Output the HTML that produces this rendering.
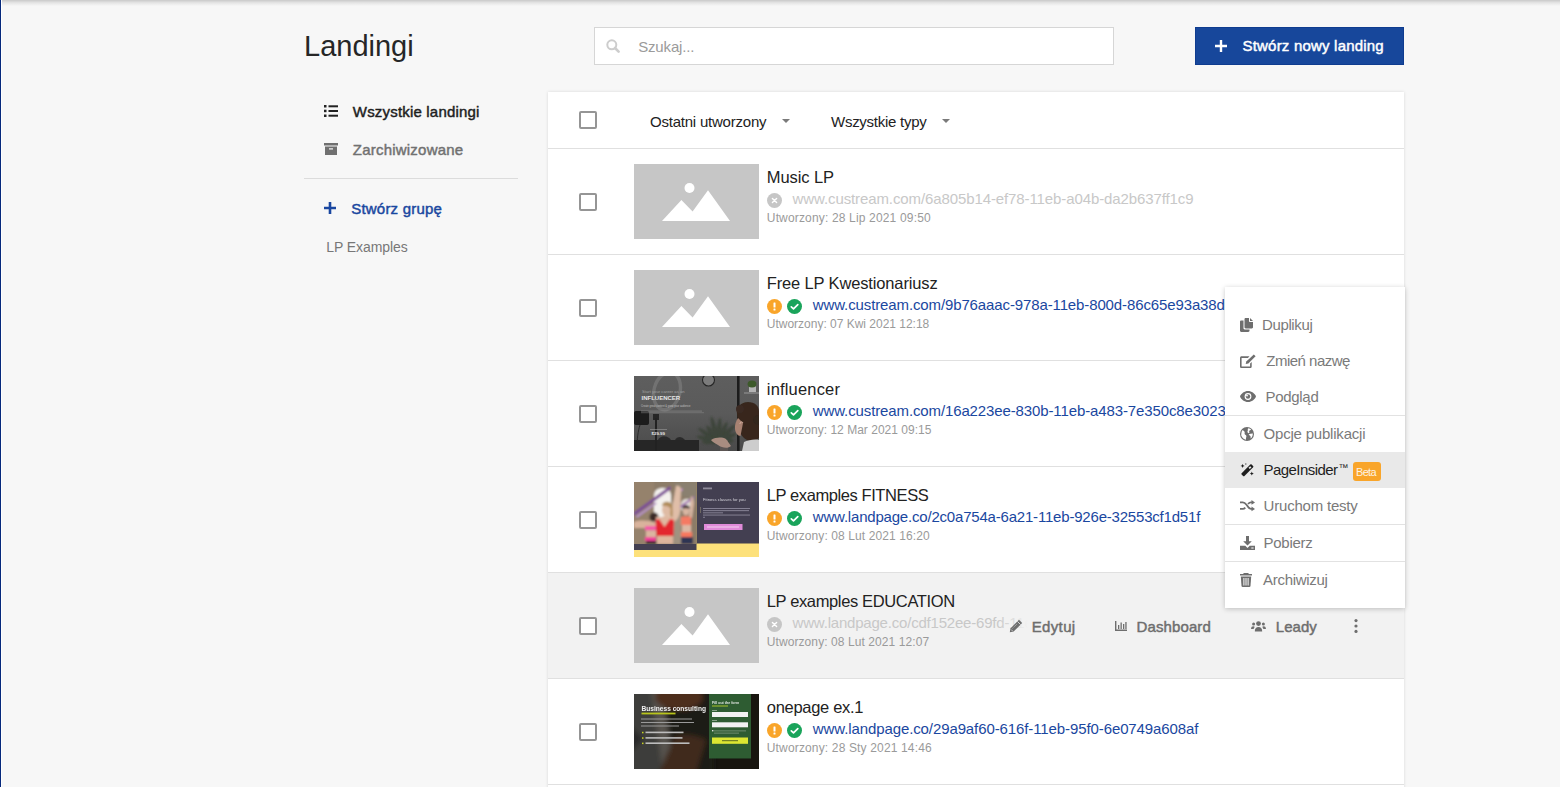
<!DOCTYPE html>
<html><head><meta charset="utf-8"><title>Landingi</title>
<style>
*{box-sizing:border-box;margin:0;padding:0}
html,body{width:1560px;height:787px;overflow:hidden;background:#f7f7f7;font-family:"Liberation Sans",sans-serif;color:#222}
.t{position:absolute;white-space:nowrap}
.r{position:absolute}
</style></head><body>
<div class="r" style="left:0px;top:0px;width:1560px;height:6px;background:linear-gradient(#c9c9c9,#e4e4e4 45%,#f7f7f7)"></div>
<div class="r" style="left:0px;top:0px;width:1px;height:787px;background:#06297c"></div>
<div class="r" style="left:1px;top:0px;width:1px;height:787px;background:#fff"></div>
<div class="t" style="left:304px;top:32px;font-size:29px;line-height:29px;color:#262626">Landingi</div>
<div class="r" style="left:594px;top:27px;width:520px;height:38px;background:#fff;border:1px solid #d6d6d6"></div>
<div class="r" style="left:606px;top:39px;line-height:0"><svg width="14" height="14" viewBox="0 0 14 14"><circle cx="5.8" cy="5.8" r="4.5" fill="none" stroke="#cdcdcd" stroke-width="2"/><path d="M9 9 L12.6 12.6" stroke="#cdcdcd" stroke-width="2.6" stroke-linecap="round"/></svg></div>
<div class="t" style="left:638.2px;top:39px;font-size:15px;line-height:15px;color:#9b9b9b;letter-spacing:-0.162px">Szukaj...</div>
<div class="r" style="left:1195px;top:27px;width:209px;height:38px;background:#17479b;border:1px solid #0f3c8f"></div>
<div class="r" style="left:1215px;top:40px;line-height:0"><svg width="12" height="12" viewBox="0 0 12 12"><path d="M6 0V12M0 6H12" stroke="#fff" stroke-width="2.4"/></svg></div>
<div class="t" style="left:1242.5px;top:38px;font-size:15px;line-height:15px;color:#fff;-webkit-text-stroke:0.45px #fff;letter-spacing:0.2px">Stwórz nowy landing</div>
<div class="r" style="left:324px;top:105px;line-height:0"><svg width="14" height="12" viewBox="0 0 14 12"><rect x="0" y="0" width="2.5" height="2.5" fill="#222"/><rect x="0" y="4.7" width="2.5" height="2.5" fill="#222"/><rect x="0" y="9.5" width="2.5" height="2.5" fill="#222"/><rect x="4.5" y="0.3" width="9.5" height="2" fill="#222"/><rect x="4.5" y="5" width="9.5" height="2" fill="#222"/><rect x="4.5" y="9.7" width="9.5" height="2" fill="#222"/></svg></div>
<div class="t" style="left:352.8px;top:104px;font-size:15px;line-height:15px;color:#1e1e1e;-webkit-text-stroke:0.45px #1e1e1e;letter-spacing:0.188px">Wszystkie landingi</div>
<div class="r" style="left:324px;top:143px;line-height:0"><svg width="14" height="12" viewBox="0 0 14 12"><rect x="0" y="0" width="14" height="2.5" fill="#707070"/><rect x="1" y="3.5" width="12" height="8.5" fill="#707070"/><rect x="5" y="5.3" width="4" height="1.2" fill="#f7f7f7"/></svg></div>
<div class="t" style="left:352.8px;top:142px;font-size:15px;line-height:15px;color:#717171;-webkit-text-stroke:0.45px #717171;letter-spacing:0.215px">Zarchiwizowane</div>
<div class="r" style="left:304px;top:178px;width:214px;height:1px;background:#dcdcdc"></div>
<div class="r" style="left:324px;top:202px;line-height:0"><svg width="12" height="12" viewBox="0 0 12 12"><path d="M6 0V12M0 6H12" stroke="#1a47a0" stroke-width="2.6"/></svg></div>
<div class="t" style="left:351.2px;top:201px;font-size:15px;line-height:15px;color:#1a47a0;-webkit-text-stroke:0.45px #1a47a0;letter-spacing:0.218px">Stwórz grupę</div>
<div class="t" style="left:326.3px;top:240px;font-size:14px;line-height:14px;color:#777;letter-spacing:-0.09px">LP Examples</div>
<div class="r" style="left:548px;top:92px;width:856px;height:700px;background:#fff;box-shadow:0 0 3px rgba(0,0,0,.13)"></div>
<div class="r" style="left:579px;top:111px;width:18px;height:18px;background:#fff;border:2px solid #959595;border-radius:2px"></div>
<div class="t" style="left:650px;top:114px;font-size:15px;line-height:15px;color:#222;letter-spacing:-0.219px">Ostatni utworzony</div>
<div class="r" style="left:782px;top:118px;line-height:0"><svg width="8" height="4" viewBox="0 0 8 4"><path d="M0 0H8L4 4Z" fill="#7a7a7a"/></svg></div>
<div class="t" style="left:831px;top:114px;font-size:15px;line-height:15px;color:#222;letter-spacing:-0.262px">Wszystkie typy</div>
<div class="r" style="left:942px;top:118px;line-height:0"><svg width="8" height="4" viewBox="0 0 8 4"><path d="M0 0H8L4 4Z" fill="#7a7a7a"/></svg></div>
<div class="r" style="left:548px;top:148px;width:856px;height:1px;background:#e0e0e0"></div>
<div class="r" style="left:579px;top:193px;width:18px;height:18px;background:#fff;border:2px solid #959595;border-radius:2px"></div>
<div class="r" style="left:634px;top:164px;line-height:0"><svg width="125" height="75" viewBox="0 0 125 75"><rect width="125" height="75" fill="#c6c6c6"/><circle cx="55.5" cy="24" r="5" fill="#fff"/><path d="M28 57L47.4 36L58.6 47.4L74 26.3L96 57Z" fill="#fff"/></svg></div>
<div class="t" style="left:766.8px;top:169px;font-size:16.5px;line-height:16.5px;color:#222;letter-spacing:-0.086px">Music LP</div>
<div class="r" style="left:767px;top:193px;line-height:0"><svg width="15" height="15" viewBox="0 0 15 15"><circle cx="7.5" cy="7.5" r="7.5" fill="#c6c6c6"/><path d="M5.4 5.4L9.6 9.6M9.6 5.4L5.4 9.6" stroke="#fff" stroke-width="1.4" stroke-linecap="round"/></svg></div>
<div class="t" style="left:792.6px;top:191px;font-size:15px;line-height:15px;color:#c8c8c8;letter-spacing:-0.104px">www.custream.com/6a805b14-ef78-11eb-a04b-da2b637ff1c9</div>
<div class="t" style="left:766.8px;top:212px;font-size:12px;line-height:12px;color:#9a9a9a;letter-spacing:0.163px">Utworzony: 28 Lip 2021 09:50</div>
<div class="r" style="left:548px;top:254px;width:856px;height:1px;background:#e0e0e0"></div>
<div class="r" style="left:579px;top:299px;width:18px;height:18px;background:#fff;border:2px solid #959595;border-radius:2px"></div>
<div class="r" style="left:634px;top:270px;line-height:0"><svg width="125" height="75" viewBox="0 0 125 75"><rect width="125" height="75" fill="#c6c6c6"/><circle cx="55.5" cy="24" r="5" fill="#fff"/><path d="M28 57L47.4 36L58.6 47.4L74 26.3L96 57Z" fill="#fff"/></svg></div>
<div class="t" style="left:766.8px;top:275px;font-size:16.5px;line-height:16.5px;color:#222;letter-spacing:-0.148px">Free LP Kwestionariusz</div>
<div class="r" style="left:767px;top:299px;line-height:0"><svg width="15" height="15" viewBox="0 0 15 15"><circle cx="7.5" cy="7.5" r="7.5" fill="#f9a52a"/><rect x="6.5" y="3.5" width="2" height="5" rx=".5" fill="#fff"/><rect x="6.5" y="9.6" width="2" height="2" rx=".5" fill="#fff"/></svg></div>
<div class="r" style="left:787px;top:299px;line-height:0"><svg width="15" height="15" viewBox="0 0 15 15"><circle cx="7.5" cy="7.5" r="7.5" fill="#1aa45b"/><path d="M4.3 7.8L6.5 9.8L10.8 5.6" fill="none" stroke="#fff" stroke-width="1.7" stroke-linecap="round" stroke-linejoin="round"/></svg></div>
<div class="t" style="left:812.8px;top:297px;font-size:15px;line-height:15px;color:#1a47a0;letter-spacing:-0.12px">www.custream.com/9b76aaac-978a-11eb-800d-86c65e93a38d</div>
<div class="t" style="left:766.8px;top:318px;font-size:12px;line-height:12px;color:#9a9a9a;letter-spacing:-0.011px">Utworzony: 07 Kwi 2021 12:18</div>
<div class="r" style="left:548px;top:360px;width:856px;height:1px;background:#e0e0e0"></div>
<div class="r" style="left:579px;top:405px;width:18px;height:18px;background:#fff;border:2px solid #959595;border-radius:2px"></div>
<div class="r" style="left:634px;top:376px;line-height:0"><svg width="125" height="75" viewBox="0 0 125 75">
<defs>
<linearGradient id="ig" x1="0" y1="0" x2="0" y2="1"><stop offset="0" stop-color="#5e5e5e"/><stop offset=".5" stop-color="#5a5a5a"/><stop offset="1" stop-color="#4a4a4a"/></linearGradient>
<filter id="bl" x="-10%" y="-10%" width="120%" height="120%"><feGaussianBlur stdDeviation="0.55"/></filter>
<filter id="bl2" x="-20%" y="-20%" width="140%" height="140%"><feGaussianBlur stdDeviation="0.9"/></filter>
</defs>
<rect width="125" height="75" fill="url(#ig)"/>
<g filter="url(#bl)">
<ellipse cx="33" cy="15" rx="13" ry="19" fill="none" stroke="#727272" stroke-width="3.4" transform="rotate(15 33 15)"/>

<circle cx="74.5" cy="4" r="6" fill="#7c7c7c" stroke="#262626" stroke-width="1.1"/>
<rect x="110" y="16" width="15" height="2" fill="#7a7a7a"/>
<rect x="115" y="10" width="7" height="6" fill="#b4b4b4"/>
<ellipse cx="118" cy="8" rx="4.5" ry="3.5" fill="#3d5a2c"/>
<g fill="#3c453a" filter="url(#bl2)"><ellipse cx="73.4" cy="63.2" rx="11.0" ry="2.3" transform="rotate(-165 73.4 63.2)"/><ellipse cx="74.2" cy="59.1" rx="12.0" ry="2.3" transform="rotate(-145 74.2 59.1)"/><ellipse cx="78.3" cy="57.8" rx="10.0" ry="2.3" transform="rotate(-125 78.3 57.8)"/><ellipse cx="80.6" cy="53.4" rx="13.0" ry="2.3" transform="rotate(-105 80.6 53.4)"/><ellipse cx="85.0" cy="54.0" rx="12.0" ry="2.3" transform="rotate(-85 85.0 54.0)"/><ellipse cx="88.6" cy="56.0" rx="11.0" ry="2.3" transform="rotate(-65 88.6 56.0)"/><ellipse cx="92.5" cy="57.5" rx="12.0" ry="2.3" transform="rotate(-45 92.5 57.5)"/><ellipse cx="93.1" cy="61.8" rx="10.0" ry="2.3" transform="rotate(-25 93.1 61.8)"/><ellipse cx="76.0" cy="66.0" rx="8.0" ry="2.3" transform="rotate(-180 76.0 66.0)"/><ellipse cx="92.0" cy="65.3" rx="8.0" ry="2.3" transform="rotate(-5 92.0 65.3)"/><ellipse cx="77.7" cy="63.0" rx="7.0" ry="2.3" transform="rotate(-155 77.7 63.0)"/><ellipse cx="89.7" cy="62.0" rx="7.0" ry="2.3" transform="rotate(-35 89.7 62.0)"/></g>
<rect x="86" y="64" width="8" height="11" fill="#5c5452"/>
<rect x="0" y="64" width="65" height="11" fill="#262626"/>
<path d="M24 64C26 59 34 59 37 64Z M41 64C43 60 48 60 51 64Z" fill="#2c2c2c"/>
<rect x="0" y="35" width="15" height="14" rx="2" fill="#1c1c1c"/>
<rect x="19" y="38" width="6" height="6" fill="#262626"/>
<rect x="21" y="42" width="2" height="33" fill="#222"/>
<path d="M6 49C4 55 3 62 3 75" stroke="#2a2a2a" stroke-width="1" fill="none"/>
<rect x="103" y="0" width="2.6" height="75" fill="#1c1c1c"/>
<path d="M103 38C102 31 107 26 114 26C121 26 125 30 125 35V62C121 66 114 66 110 62C107 59 104 54 104 48Z" fill="#37281f"/><circle cx="106" cy="33" r="4" fill="#3a2a22"/><circle cx="124" cy="44" r="5" fill="#33251e"/>
<path d="M104 42C102 45 100.5 49 101 53C101.5 57 103.5 60 106.5 60L109 47Z" fill="#a88272"/>
<path d="M106 48C106 46 108 45 109 47" stroke="#d8b0a0" stroke-width="1" fill="none"/>
<path d="M110 66C114 64 121 63 125 64V75H108Z" fill="#cdcdcd"/>
<path d="M77 64C82 61 88 61 92 63L97 70C94 73 88 72 84 69C81 67 78 66 77 64Z" fill="#a88c80"/>
</g>
<text x="8" y="16.5" font-family="Liberation Sans" font-size="4.2" fill="#a0a0a0">Start your career as an</text>
<text x="7.5" y="23.6" font-family="Liberation Sans" font-size="6" font-weight="700" fill="#e6e6e6">INFLUENCER</text>
<text x="7" y="30.5" font-family="Liberation Sans" font-size="2.6" fill="#c0c0c0">Create great content &amp; grow your audience</text>
<rect x="7" y="34.8" width="61" height="0.5" fill="#9a9a9a"/>
<rect x="7" y="36.6" width="63" height="0.5" fill="#8a8a8a"/>
<rect x="16" y="53" width="17" height="0.6" fill="#9a9a9a"/>
<text x="17.5" y="58.8" font-family="Liberation Sans" font-size="4.4" font-weight="700" fill="#e6e6e6">$29.99</text>
</svg>
</div>
<div class="t" style="left:766.8px;top:381px;font-size:16.5px;line-height:16.5px;color:#222;letter-spacing:0.178px">influencer</div>
<div class="r" style="left:767px;top:405px;line-height:0"><svg width="15" height="15" viewBox="0 0 15 15"><circle cx="7.5" cy="7.5" r="7.5" fill="#f9a52a"/><rect x="6.5" y="3.5" width="2" height="5" rx=".5" fill="#fff"/><rect x="6.5" y="9.6" width="2" height="2" rx=".5" fill="#fff"/></svg></div>
<div class="r" style="left:787px;top:405px;line-height:0"><svg width="15" height="15" viewBox="0 0 15 15"><circle cx="7.5" cy="7.5" r="7.5" fill="#1aa45b"/><path d="M4.3 7.8L6.5 9.8L10.8 5.6" fill="none" stroke="#fff" stroke-width="1.7" stroke-linecap="round" stroke-linejoin="round"/></svg></div>
<div class="t" style="left:812.8px;top:403px;font-size:15px;line-height:15px;color:#1a47a0;letter-spacing:-0.12px">www.custream.com/16a223ee-830b-11eb-a483-7e350c8e3023</div>
<div class="t" style="left:766.8px;top:424px;font-size:12px;line-height:12px;color:#9a9a9a;letter-spacing:0.022px">Utworzony: 12 Mar 2021 09:15</div>
<div class="r" style="left:548px;top:466px;width:856px;height:1px;background:#e0e0e0"></div>
<div class="r" style="left:579px;top:511px;width:18px;height:18px;background:#fff;border:2px solid #959595;border-radius:2px"></div>
<div class="r" style="left:634px;top:482px;line-height:0"><svg width="125" height="75" viewBox="0 0 125 75">
<defs><filter id="fb" x="-5%" y="-5%" width="110%" height="110%"><feGaussianBlur stdDeviation="0.55"/></filter><filter id="fb2" x="-10%" y="-10%" width="120%" height="120%"><feGaussianBlur stdDeviation="0.8"/></filter><clipPath id="fc"><rect x="0" y="0" width="62.5" height="62"/></clipPath></defs>
<rect width="125" height="75" fill="#fde17b"/>
<rect x="62.5" y="0" width="62.5" height="61.5" fill="#433f51"/>
<rect x="0" y="61.5" width="62.5" height="6.5" fill="#433f51"/>
<g clip-path="url(#fc)"><rect x="0" y="0" width="62.5" height="62" fill="#8c7b68"/><g filter="url(#fb2)">
<rect x="-5" y="-5" width="72" height="72" fill="#8c7b68"/>
<rect x="-5" y="-5" width="25" height="72" fill="#95826c"/>
<path d="M40 0H62.5V22C58 18 50 14 44 12Z" fill="#8a8070"/>
<path d="M20 40V14C20 8 24 6 29 6C34 6 37 9 37 14V40Z" fill="#f4f2ee"/>
<path d="M47 28V22C48 18 50 17 53 17C56 17 57 19 57 22V28Z" fill="#e6e2dc"/>
<rect x="37" y="20" width="10" height="42" fill="#a09280"/>
<path d="M0 30L36 4L37 7L0 34Z" fill="#7c4d97"/>
<path d="M2 34L22 20L22.5 22L3 36Z" fill="#b592c7"/>
<path d="M43 12L48 6L49 8Z" fill="#c690d0"/>
<path d="M40 28L60 14L60.5 16L41 30Z" fill="#9e70b0"/>
<circle cx="20" cy="35" r="4.5" fill="#3a2a28"/>
<path d="M0 40C6 38 14 38 22 41V46H0Z" fill="#d9b39c"/>
<rect x="11" y="44" width="12" height="4.5" fill="#f45aa8"/>
<rect x="12" y="48.5" width="10" height="7" fill="#dcb5a0"/>
<rect x="11" y="55" width="11" height="4" fill="#f0409a"/>
<rect x="12" y="59" width="10" height="3" fill="#222"/>
<path d="M42 4C45 3 47 5 47 8L46 30C45 35 43 38 40 40L36 38Z" fill="#e0bea8"/>
<ellipse cx="33" cy="28" rx="5" ry="6.5" fill="#dfbba4"/>
<path d="M28 24C28 20 32 19 35 20C38 21 39 25 38 28C36 24 31 23 28 24Z" fill="#b08c5a"/>
<path d="M37 22C39 26 39 32 38 37L36 36Z" fill="#b08c5a"/>
<rect x="29" y="34" width="8" height="4" fill="#e0bba3"/>
<path d="M22 35H40V47H22Z" fill="#dfb8a0"/><path d="M21.5 38L25 37L30.5 45L36 37L40 38L39.5 54C35 56 27 56 22.5 54Z" fill="#e3262e"/>
<rect x="23" y="54" width="16" height="8" fill="#dfb59c"/>
<path d="M57 14C59 15 60 18 60 22L58 36H55Z" fill="#d8b6a2"/>
<ellipse cx="52" cy="29" rx="3.3" ry="4.2" fill="#d8b6a2"/>
<path d="M48 27C48 24 50 23 52 23C54 23 56 24 56 27C54 26 50 26 48 27Z" fill="#3a2e2a"/>
<path d="M47 35C50 34 54 34 57 35V43H47Z" fill="#f57a63"/>
<rect x="48" y="43" width="9" height="7" fill="#dcb8a4"/>
<rect x="47" y="50" width="11" height="5" fill="#f7785f"/>
<rect x="47" y="55" width="12" height="7" fill="#2d3552"/>
</g></g>
<g filter="url(#fb)">
<rect x="69" y="5.5" width="9" height="1.8" fill="#8e8a9a"/>
<text x="69" y="19" font-family="Liberation Sans" font-size="4.2" fill="#d4d2da">Fitness classes for you</text>
<rect x="66" y="25" width="0.8" height="6" fill="#7a7468"/>
<rect x="69" y="26" width="47" height="0.9" fill="#8c889a"/>
<rect x="69" y="28.2" width="46" height="0.9" fill="#8c889a"/>
<rect x="69" y="30.4" width="20" height="0.9" fill="#8c889a"/>
<rect x="69" y="32.6" width="47" height="0.9" fill="#8c889a"/>
<rect x="69" y="34.8" width="2" height="0.9" fill="#8c889a"/>
<rect x="70" y="42" width="38.5" height="6" fill="#e08bd9"/>
<rect x="73" y="44.5" width="32" height="1" fill="#f4d0f0"/>
</g>
</svg></div>
<div class="t" style="left:766.8px;top:487px;font-size:16.5px;line-height:16.5px;color:#222;letter-spacing:-0.411px">LP examples FITNESS</div>
<div class="r" style="left:767px;top:511px;line-height:0"><svg width="15" height="15" viewBox="0 0 15 15"><circle cx="7.5" cy="7.5" r="7.5" fill="#f9a52a"/><rect x="6.5" y="3.5" width="2" height="5" rx=".5" fill="#fff"/><rect x="6.5" y="9.6" width="2" height="2" rx=".5" fill="#fff"/></svg></div>
<div class="r" style="left:787px;top:511px;line-height:0"><svg width="15" height="15" viewBox="0 0 15 15"><circle cx="7.5" cy="7.5" r="7.5" fill="#1aa45b"/><path d="M4.3 7.8L6.5 9.8L10.8 5.6" fill="none" stroke="#fff" stroke-width="1.7" stroke-linecap="round" stroke-linejoin="round"/></svg></div>
<div class="t" style="left:812.8px;top:509px;font-size:15px;line-height:15px;color:#1a47a0;letter-spacing:-0.196px">www.landpage.co/2c0a754a-6a21-11eb-926e-32553cf1d51f</div>
<div class="t" style="left:766.8px;top:530px;font-size:12px;line-height:12px;color:#9a9a9a;letter-spacing:0.1px">Utworzony: 08 Lut 2021 16:20</div>
<div class="r" style="left:548px;top:572px;width:856px;height:1px;background:#e0e0e0"></div>
<div class="r" style="left:548px;top:573px;width:856px;height:105px;background:#f2f2f2"></div>
<div class="r" style="left:579px;top:617px;width:18px;height:18px;background:#fff;border:2px solid #959595;border-radius:2px"></div>
<div class="r" style="left:634px;top:588px;line-height:0"><svg width="125" height="75" viewBox="0 0 125 75"><rect width="125" height="75" fill="#c6c6c6"/><circle cx="55.5" cy="24" r="5" fill="#fff"/><path d="M28 57L47.4 36L58.6 47.4L74 26.3L96 57Z" fill="#fff"/></svg></div>
<div class="t" style="left:766.8px;top:593px;font-size:16.5px;line-height:16.5px;color:#222;letter-spacing:-0.365px">LP examples EDUCATION</div>
<div class="r" style="left:767px;top:617px;line-height:0"><svg width="15" height="15" viewBox="0 0 15 15"><circle cx="7.5" cy="7.5" r="7.5" fill="#c6c6c6"/><path d="M5.4 5.4L9.6 9.6M9.6 5.4L5.4 9.6" stroke="#fff" stroke-width="1.4" stroke-linecap="round"/></svg></div>
<div class="t" style="left:792.6px;top:615px;font-size:15px;line-height:15px;color:#c8c8c8;letter-spacing:-0.2px">www.landpage.co/cdf152ee-69fd-11eb-8a1e-2e0a1d8c0a2c</div>
<div class="t" style="left:766.8px;top:636px;font-size:12px;line-height:12px;color:#9a9a9a;letter-spacing:0.081px">Utworzony: 08 Lut 2021 12:07</div>
<div class="r" style="left:548px;top:678px;width:856px;height:1px;background:#e0e0e0"></div>
<div class="r" style="left:996px;top:613px;width:36px;height:24px;background:linear-gradient(90deg,rgba(242,242,242,0),#f2f2f2 90%)"></div>
<div class="r" style="left:1032px;top:613px;width:372px;height:24px;background:#f2f2f2"></div>
<div class="r" style="left:1009px;top:619px;line-height:0"><svg width="14" height="14" viewBox="0 0 14 14"><path d="M10 0.8L13.2 4L4.6 12.6L0.8 13.2L1.4 9.4Z" fill="#6e6e6e"/><path d="M8.4 2.4L11.6 5.6" stroke="#f2f2f2" stroke-width="0.8"/><path d="M2.2 10.6L3.4 11.8" stroke="#f2f2f2" stroke-width="0.9"/><path d="M3.6 9.4L8.6 4.4" stroke="#f2f2f2" stroke-width="0.6" stroke-dasharray="0.9 0.9"/></svg></div>
<div class="t" style="left:1031.7px;top:619px;font-size:15px;line-height:15px;color:#6e6e6e;-webkit-text-stroke:0.45px #6e6e6e;letter-spacing:0.36px">Edytuj</div>
<div class="r" style="left:1115px;top:621px;line-height:0"><svg width="12" height="10" viewBox="0 0 12 10"><path d="M0.7 0V9.3H12" fill="none" stroke="#6e6e6e" stroke-width="1.4"/><rect x="3" y="4" width="1.3" height="4" fill="#6e6e6e"/><rect x="5.5" y="1.5" width="1.3" height="6.5" fill="#6e6e6e"/><rect x="8" y="3" width="1.3" height="5" fill="#6e6e6e"/><rect x="10.3" y="1" width="1.3" height="7" fill="#6e6e6e"/></svg></div>
<div class="t" style="left:1136.5px;top:619px;font-size:15px;line-height:15px;color:#6e6e6e;-webkit-text-stroke:0.45px #6e6e6e;letter-spacing:0.113px">Dashboard</div>
<div class="r" style="left:1251px;top:621px;line-height:0"><svg width="15" height="11" viewBox="0 0 15 11"><circle cx="7.5" cy="2.6" r="2.4" fill="#6e6e6e"/><path d="M3.8 10.5C3.8 7.5 5 6 7.5 6S11.2 7.5 11.2 10.5Z" fill="#6e6e6e"/><circle cx="2.6" cy="2.9" r="1.5" fill="#6e6e6e"/><circle cx="12.4" cy="2.9" r="1.5" fill="#6e6e6e"/><path d="M0 8C0.2 6 1 5.3 2.3 5.3C3 5.3 3.4 5.5 3.8 5.9C3 6.6 2.8 7.2 2.7 8Z" fill="#6e6e6e"/><path d="M15 8C14.8 6 14 5.3 12.7 5.3C12 5.3 11.6 5.5 11.2 5.9C12 6.6 12.2 7.2 12.3 8Z" fill="#6e6e6e"/></svg></div>
<div class="t" style="left:1275.8px;top:619px;font-size:15px;line-height:15px;color:#6e6e6e;-webkit-text-stroke:0.45px #6e6e6e;letter-spacing:0.05px">Leady</div>
<div class="r" style="left:1354px;top:619px;line-height:0"><svg width="4" height="14" viewBox="0 0 4 14"><circle cx="2" cy="1.6" r="1.6" fill="#6e6e6e"/><circle cx="2" cy="7" r="1.6" fill="#6e6e6e"/><circle cx="2" cy="12.4" r="1.6" fill="#6e6e6e"/></svg></div>
<div class="r" style="left:579px;top:723px;width:18px;height:18px;background:#fff;border:2px solid #959595;border-radius:2px"></div>
<div class="r" style="left:634px;top:694px;line-height:0"><svg width="125" height="75" viewBox="0 0 125 75">
<defs>
<filter id="bb" x="-5%" y="-5%" width="110%" height="110%"><feGaussianBlur stdDeviation="0.5"/></filter>
<filter id="bb2" x="-20%" y="-20%" width="140%" height="140%"><feGaussianBlur stdDeviation="2.5"/></filter>
<radialGradient id="brg" cx=".35" cy=".1" r=".5"><stop offset="0" stop-color="#5a3422"/><stop offset="1" stop-color="#1c1711" stop-opacity="0"/></radialGradient>
</defs>
<rect width="125" height="75" fill="#18150f"/>
<g filter="url(#bb2)">
<rect x="-10" y="-10" width="90" height="95" fill="#1e1a14"/>
<path d="M-10 -10H22L30 85H-10Z" fill="#3e3d3a"/>
<path d="M-10 25L10 45L-10 65Z" fill="#2c2c2a"/>
<path d="M16 -10H27L42 85H30Z" fill="#57534e"/>
<ellipse cx="45" cy="3" rx="24" ry="13" fill="#4e2d1d"/>
<path d="M22 85L40 44C48 39 60 41 72 46L60 85Z" fill="#40291e"/>
</g>
<g filter="url(#bb)">
<rect x="75" y="0" width="42" height="64.5" fill="#2e5b32"/>
<text x="7.5" y="16.5" font-family="Liberation Sans" font-size="6.6" font-weight="700" fill="#f0f0f0">Business consulting</text>
<rect x="7.5" y="18.6" width="34" height="1.8" fill="#b8c41e"/>
<rect x="7" y="24.5" width="51" height="1" fill="#9a9a9a"/>
<rect x="7" y="28" width="53" height="1" fill="#9a9a9a"/>
<rect x="7" y="31.5" width="38" height="1" fill="#9a9a9a"/>
<rect x="8" y="37.8" width="1.5" height="1.5" fill="#c8d420"/>
<rect x="11.5" y="37.6" width="38" height="1.6" fill="#bdbdbd"/>
<rect x="8" y="43.3" width="1.5" height="1.5" fill="#c8d420"/>
<rect x="11.5" y="43.1" width="37" height="1.6" fill="#bdbdbd"/>
<rect x="8" y="48.6" width="1.5" height="1.5" fill="#c8d420"/>
<rect x="11.5" y="48.4" width="44" height="1.6" fill="#bdbdbd"/>
<text x="78" y="10" font-family="Liberation Sans" font-size="3.6" font-weight="700" fill="#dfe6df">Fill out the form</text>
<rect x="78" y="11.5" width="16" height="1" fill="#a8c42a"/>
<rect x="78" y="16" width="5" height=".8" fill="#9fb59f"/>
<rect x="78" y="18" width="36" height="5" fill="#f2f2f2"/>
<rect x="78" y="26" width="5" height=".8" fill="#9fb59f"/>
<rect x="78" y="28.3" width="36" height="5" fill="#f2f2f2"/>
<rect x="78" y="36" width="1.4" height="1.4" fill="#dcdcdc"/>
<rect x="80" y="36.5" width="32" height=".8" fill="#7e9a7e"/>
<rect x="80" y="38.7" width="25" height=".8" fill="#7e9a7e"/>
<rect x="78" y="43.5" width="36" height="6.3" fill="#dde632"/>
<rect x="88" y="46.2" width="16" height="1" fill="#5a6a20"/>
</g>
</svg></div>
<div class="t" style="left:766.8px;top:699px;font-size:16.5px;line-height:16.5px;color:#222;letter-spacing:-0.3px">onepage ex.1</div>
<div class="r" style="left:767px;top:723px;line-height:0"><svg width="15" height="15" viewBox="0 0 15 15"><circle cx="7.5" cy="7.5" r="7.5" fill="#f9a52a"/><rect x="6.5" y="3.5" width="2" height="5" rx=".5" fill="#fff"/><rect x="6.5" y="9.6" width="2" height="2" rx=".5" fill="#fff"/></svg></div>
<div class="r" style="left:787px;top:723px;line-height:0"><svg width="15" height="15" viewBox="0 0 15 15"><circle cx="7.5" cy="7.5" r="7.5" fill="#1aa45b"/><path d="M4.3 7.8L6.5 9.8L10.8 5.6" fill="none" stroke="#fff" stroke-width="1.7" stroke-linecap="round" stroke-linejoin="round"/></svg></div>
<div class="t" style="left:812.8px;top:721px;font-size:15px;line-height:15px;color:#1a47a0;letter-spacing:-0.102px">www.landpage.co/29a9af60-616f-11eb-95f0-6e0749a608af</div>
<div class="t" style="left:766.8px;top:742px;font-size:12px;line-height:12px;color:#9a9a9a;letter-spacing:0.152px">Utworzony: 28 Sty 2021 14:46</div>
<div class="r" style="left:548px;top:784px;width:856px;height:1px;background:#e0e0e0"></div>
<div class="r" style="left:1225px;top:287px;width:180px;height:321px;background:#fff;box-shadow:0 1px 5px rgba(0,0,0,.22)"></div>
<div class="r" style="left:1225px;top:452px;width:180px;height:36px;background:#e9e9e9"></div>
<div class="r" style="left:1225px;top:415px;width:180px;height:1px;background:#e2e2e2"></div>
<div class="r" style="left:1225px;top:524px;width:180px;height:1px;background:#e2e2e2"></div>
<div class="r" style="left:1225px;top:561px;width:180px;height:1px;background:#e2e2e2"></div>
<div class="r" style="left:1240px;top:318px;line-height:0"><svg width="13" height="14" viewBox="0 0 13 14"><path d="M3.5 2.5H1.2C.6 2.5 0 3 0 3.6V12.8C0 13.4.6 14 1.2 14H8.3C8.9 14 9.5 13.4 9.5 12.8V11.5H4.7C4 11.5 3.5 11 3.5 10.3Z" fill="#6e6e6e"/><path d="M4.5 1.2C4.5.6 5 0 5.7 0H9V3.2C9 3.7 9.3 4 9.8 4H13V9.3C13 9.9 12.5 10.5 11.8 10.5H5.7C5 10.5 4.5 9.9 4.5 9.3Z" fill="#6e6e6e"/><path d="M10 0L13 3H10Z" fill="#6e6e6e"/></svg></div>
<div class="t" style="left:1261.9px;top:317px;font-size:15px;line-height:15px;color:#7a7a7a;letter-spacing:-0.343px">Duplikuj</div>
<div class="r" style="left:1240px;top:354px;line-height:0"><svg width="16" height="14" viewBox="0 0 16 14"><path d="M9.5 2.3H1.6C.7 2.3 0 3 0 3.9V12.4C0 13.3.7 14 1.6 14H10.1C11 14 11.7 13.3 11.7 12.4V8L10.1 9.6V12.4H1.6V3.9H7.9Z" fill="#6e6e6e"/><path d="M13.8 .4L15.6 2.2L8.3 9.5L5.7 10.1L6.3 7.5Z" fill="#6e6e6e"/></svg></div>
<div class="t" style="left:1266.3px;top:353px;font-size:15px;line-height:15px;color:#7a7a7a;letter-spacing:-0.51px">Zmień nazwę</div>
<div class="r" style="left:1240px;top:391px;line-height:0"><svg width="16" height="11" viewBox="0 0 16 11"><path d="M8 0C4.3 0 1.3 2.4 0 5.5C1.3 8.6 4.3 11 8 11S14.7 8.6 16 5.5C14.7 2.4 11.7 0 8 0Z" fill="#6e6e6e"/><circle cx="8" cy="5.5" r="3.4" fill="#fff"/><circle cx="8" cy="5.5" r="2.2" fill="#6e6e6e"/><circle cx="7" cy="4.6" r="0.9" fill="#fff"/></svg></div>
<div class="t" style="left:1265.6px;top:389px;font-size:15px;line-height:15px;color:#7a7a7a;letter-spacing:-0.317px">Podgląd</div>
<div class="r" style="left:1240px;top:427px;line-height:0"><svg width="14" height="14" viewBox="0 0 14 14"><circle cx="7" cy="7" r="7" fill="#6e6e6e"/><path d="M2.2 3.2C3.5 3.3 4.2 4 4.6 4.9C5 5.8 4.3 6.4 4.8 7.3C5.3 8.1 6.3 8 6.4 9C6.5 10 5.8 10.8 6 12.8C4 12.3 2.3 10.8 1.3 8.7C1.1 7 1.5 4.6 2.2 3.2Z" fill="#fff"/><path d="M8.5 1.2C9.5 1.4 10.5 2 11.3 2.8C10.6 3.3 9.6 3.2 9.2 3.9C8.9 4.6 9.7 5.2 9.3 5.8C8.8 6.5 7.8 6 7.5 5.3C7.2 4.3 8.2 3.5 7.8 2.6C7.6 2 8 1.5 8.5 1.2Z" fill="#fff"/><path d="M12.8 6.5C12.9 8.5 12.2 10.3 10.8 11.6C10.4 10.8 10.9 9.7 10.3 9C9.8 8.3 8.8 8.5 8.8 7.6C8.9 6.8 10.2 6.9 11.2 6.7C11.9 6.5 12.4 6.4 12.8 6.5Z" fill="#fff"/></svg></div>
<div class="t" style="left:1263.6px;top:426px;font-size:15px;line-height:15px;color:#7a7a7a;letter-spacing:-0.207px">Opcje publikacji</div>
<div class="r" style="left:1240px;top:463px;line-height:0"><svg width="15" height="14" viewBox="0 0 15 14"><g transform="rotate(-45 7.3 7.3)"><rect x="0.3" y="5.3" width="14.2" height="4" rx="1" fill="#1e1e1e"/><rect x="9.9" y="6.4" width="2.4" height="1.8" fill="#e9e9e9"/></g><path d="M2.6 .9L3.2 2.3L4.6 2.9L3.2 3.5L2.6 4.9L2 3.5L.6 2.9L2 2.3Z" fill="#1e1e1e"/><path d="M5.9 0L6.2 .7L6.9 1L6.2 1.3L5.9 2L5.6 1.3L4.9 1L5.6 .7Z" fill="#1e1e1e"/><path d="M11.8 8.6L12.4 10L13.8 10.6L12.4 11.2L11.8 12.6L11.2 11.2L9.8 10.6L11.2 10Z" fill="#1e1e1e"/></svg></div>
<div class="t" style="left:1263.6px;top:462px;font-size:15px;line-height:15px;color:#1e1e1e;letter-spacing:-0.564px">PageInsider<span style="font-size:10px;position:relative;top:-4px;margin-left:1px">™</span></div>
<div class="r" style="left:1353px;top:462px;width:28px;height:19px;background:#f9a52a;border-radius:3px"></div>
<div class="t" style="left:1356px;top:467px;font-size:11px;line-height:11px;color:#fdf3e3;letter-spacing:-0.667px">Beta</div>
<div class="r" style="left:1240px;top:500px;line-height:0"><svg width="15" height="12" viewBox="0 0 15 12"><path d="M0 2.4H2.8C4.5 2.4 5.5 3.5 6.5 4.8L8.5 7.4C9.2 8.3 9.8 8.9 11 8.9H12" fill="none" stroke="#6e6e6e" stroke-width="1.8"/><path d="M0 8.9H2.8C4 8.9 4.6 8.4 5.3 7.6M8 4C8.9 3 9.6 2.4 11 2.4H12" fill="none" stroke="#6e6e6e" stroke-width="1.8"/><path d="M11.5 0L15 2.4L11.5 4.8Z" fill="#6e6e6e"/><path d="M11.5 6.5L15 8.9L11.5 11.3Z" fill="#6e6e6e"/></svg></div>
<div class="t" style="left:1263.6px;top:498px;font-size:15px;line-height:15px;color:#7a7a7a;letter-spacing:-0.208px">Uruchom testy</div>
<div class="r" style="left:1240px;top:536px;line-height:0"><svg width="15" height="14" viewBox="0 0 15 14"><path d="M6 0H9V5.3H11.8L7.5 9.6L3.2 5.3H6Z" fill="#6e6e6e"/><path d="M0 9.8H5.3L7.5 12L9.7 9.8H15V14H0Z" fill="#6e6e6e"/><rect x="11.3" y="11.5" width="2.3" height="1" fill="#fff"/></svg></div>
<div class="t" style="left:1263.6px;top:535px;font-size:15px;line-height:15px;color:#7a7a7a;letter-spacing:-0.283px">Pobierz</div>
<div class="r" style="left:1240px;top:573px;line-height:0"><svg width="12" height="14" viewBox="0 0 12 14"><path d="M3.7 0H8.3L8.8 1H12V2.6H0V1H3.2Z" fill="#6e6e6e"/><path d="M.8 3.4H11.2L10.5 13C10.4 13.6 10 14 9.4 14H2.6C2 14 1.6 13.6 1.5 13Z" fill="#6e6e6e"/><rect x="3.4" y="5" width="1" height="7.5" fill="#fff"/><rect x="5.5" y="5" width="1" height="7.5" fill="#fff"/><rect x="7.6" y="5" width="1" height="7.5" fill="#fff"/></svg></div>
<div class="t" style="left:1263.1px;top:572px;font-size:15px;line-height:15px;color:#7a7a7a;letter-spacing:-0.3px">Archiwizuj</div>
</body></html>
